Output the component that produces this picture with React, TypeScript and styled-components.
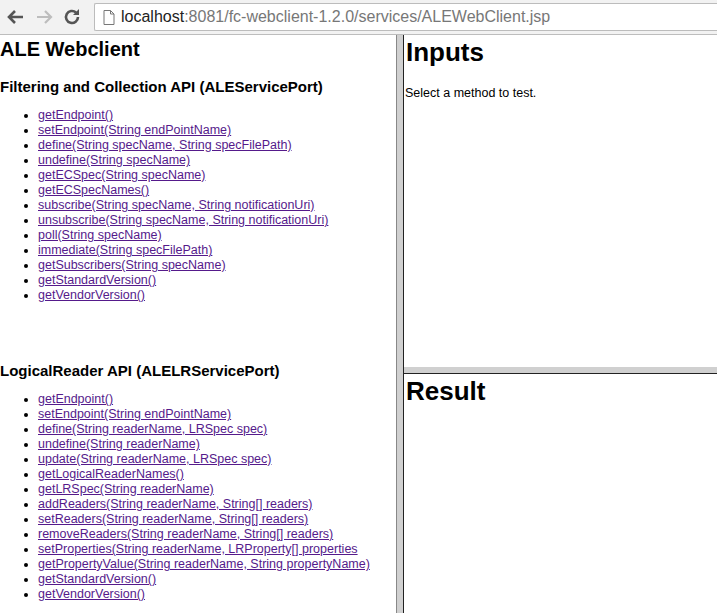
import React from "react";
import styled, { createGlobalStyle } from "styled-components";

const Global = createGlobalStyle`
  html, body { margin: 0; padding: 0; height: 100%; overflow: hidden; }
  body { font-family: "Liberation Sans", Arial, sans-serif; background: #fff; }
`;

const aleMethods = [
  "getEndpoint()", "setEndpoint(String endPointName)", "define(String specName, String specFilePath)",
  "undefine(String specName)", "getECSpec(String specName)", "getECSpecNames()",
  "subscribe(String specName, String notificationUri)", "unsubscribe(String specName, String notificationUri)",
  "poll(String specName)", "immediate(String specFilePath)", "getSubscribers(String specName)",
  "getStandardVersion()", "getVendorVersion()",
];

const lrMethods = [
  "getEndpoint()", "setEndpoint(String endPointName)", "define(String readerName, LRSpec spec)",
  "undefine(String readerName)", "update(String readerName, LRSpec spec)", "getLogicalReaderNames()",
  "getLRSpec(String readerName)", "addReaders(String readerName, String[] readers)",
  "setReaders(String readerName, String[] readers)", "removeReaders(String readerName, String[] readers)",
  "setProperties(String readerName, LRProperty[] properties", "getPropertyValue(String readerName, String propertyName)",
  "getStandardVersion()", "getVendorVersion()",
];

const Page = styled.div`
  width: 717px;
  height: 613px;
  display: flex;
  flex-direction: column;
`;

const Toolbar = styled.div`
  height: 35px;
  display: flex;
  align-items: center;
  background: #f2f2f2;
  border-bottom: 1px solid #bdbdbd;
  box-sizing: border-box;
  padding-left: 6px;
  gap: 8px;
`;

const NavIcon = styled.svg<{ $dim?: boolean }>`
  width: 20px;
  height: 20px;
  color: ${({ $dim }) => ($dim ? "#bdbdbd" : "#555")};
`;

const UrlBox = styled.div`
  flex: 1;
  height: 26px;
  margin-left: 4px;
  background: #fff;
  border: 1px solid #bcbcbc;
  border-right: none;
  border-radius: 2px 0 0 2px;
  display: flex;
  align-items: center;
  padding-left: 8px;
  gap: 6px;
  font-size: 16px;
  color: #222;
`;

const Host = styled.span`color: #222;`;
const Path = styled.span`color: #777;`;

const Frames = styled.div`
  flex: 1;
  display: flex;
  min-height: 0;
`;

const LeftFrame = styled.div`
  width: 397px;
  border-right: 6px solid #d0d0d0;
  box-shadow: inset -1px 0 0 #888;
  overflow: hidden;
`;

const RightCol = styled.div`
  flex: 1;
  display: flex;
  flex-direction: column;
  border-left: 1px solid #222;
`;

const TopFrame = styled.div`
  height: 332px;
  border-bottom: 6px solid #d0d0d0;
  overflow: hidden;
`;

const BottomFrame = styled.div`
  flex: 1;
  border-top: 1px solid #222;
  overflow: hidden;
`;

const Title = styled.h2`
  font-size: 20px;
  margin: 2px 0 0;
  line-height: 24px;
`;

const Section = styled.h3<{ $top: number }>`
  font-size: 15px;
  margin: ${({ $top }) => $top}px 0 0;
  line-height: 18px;
`;

const List = styled.ul`
  margin: 12px 0 0;
  padding-left: 38px;
  font-size: 12.5px;
  line-height: 15px;
`;

const Link = styled.a`
  color: #551a8b;
  text-decoration: underline;
`;

const BigHead = styled.h1`
  font-size: 26px;
  margin: 1px 0 0 2px;
  line-height: 32px;
`;

const Note = styled.p`
  font-size: 12.5px;
  margin: 18px 0 0 1px;
`;

const Methods = ({ items }: { items: string[] }) => (
  <List>
    {items.map((m, i) => (
      <li key={i}><Link href="#">{m}</Link></li>
    ))}
  </List>
);

export default function App() {
  return (
    <Page>
      <Global />
      <Toolbar>
        <NavIcon viewBox="0 0 20 20"><path d="M17 10H4M9 4l-6 6 6 6" stroke="currentColor" strokeWidth="2.6" fill="none" /></NavIcon>
        <NavIcon $dim viewBox="0 0 20 20"><path d="M3 10h13M11 4l6 6-6 6" stroke="currentColor" strokeWidth="2.2" fill="none" /></NavIcon>
        <NavIcon viewBox="0 0 20 20"><path d="M16 10a6 6 0 1 1-2-4.5" stroke="currentColor" strokeWidth="2.6" fill="none" /><path d="M17 2v6h-6z" fill="currentColor" /></NavIcon>
        <UrlBox>
          <svg width="12" height="15" viewBox="0 0 12 15"><path d="M1 .5h6.5L11 4v10.5H1z M7.5.5V4H11" stroke="#777" fill="#fff" /></svg>
          <span><Host>localhost</Host><Path>:8081/fc-webclient-1.2.0/services/ALEWebClient.jsp</Path></span>
        </UrlBox>
      </Toolbar>
      <Frames>
        <LeftFrame>
          <Title>ALE Webclient</Title>
          <Section $top={17}>Filtering and Collection API (ALEServicePort)</Section>
          <Methods items={aleMethods} />
          <Section $top={59}>LogicalReader API (ALELRServicePort)</Section>
          <Methods items={lrMethods} />
        </LeftFrame>
        <RightCol>
          <TopFrame>
            <BigHead>Inputs</BigHead>
            <Note>Select a method to test.</Note>
          </TopFrame>
          <BottomFrame>
            <BigHead>Result</BigHead>
          </BottomFrame>
        </RightCol>
      </Frames>
    </Page>
  );
}
